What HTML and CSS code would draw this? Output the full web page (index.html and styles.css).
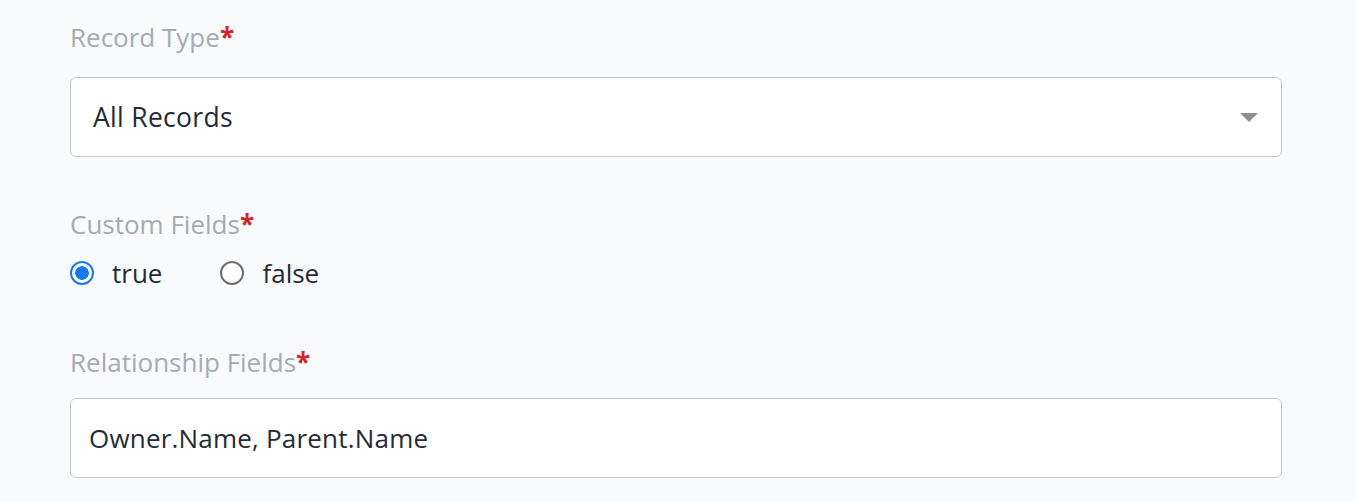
FILE: index.html
```html
<!DOCTYPE html>
<html>
<head>
<meta charset="utf-8">
<link rel="stylesheet" href="styles.css">
</head>
<body>
<div class="form">
  <div class="field">
    <div class="label">Record Type<span class="req">*</span></div>
    <div class="select">
      <span class="value">All Records</span>
      <span class="caret"></span>
    </div>
  </div>
  <div class="field radios-field">
    <div class="label">Custom Fields<span class="req">*</span></div>
    <div class="radios">
      <label class="radio"><span class="dot checked"></span><span class="rtext">true</span></label>
      <label class="radio"><span class="dot"></span><span class="rtext">false</span></label>
    </div>
  </div>
  <div class="field rel-field">
    <div class="label">Relationship Fields<span class="req">*</span></div>
    <div class="input">
      <span class="value2">Owner.Name, Parent.Name</span>
    </div>
  </div>
</div>
</body>
</html>
```
FILE: styles.css
```css
html, body {
  margin: 0;
  padding: 0;
  background: #f9fafc;
}
body {
  font-family: "Open Sans", "Lato", sans-serif;
  color: #262b33;
}
.form {
  padding: 19px 74px 0 70px;
  display: flex;
  flex-direction: column;
}
.label {
  font-size: 26px;
  line-height: 36px;
  color: #a3abb3;
}
.req {
  color: #d0262b;
  font-weight: 700;
}
.select {
  margin-top: 22px;
  border: 1px solid #c8c9cb;
  border-radius: 6px;
  background: #fff;
  display: flex;
  align-items: center;
  justify-content: space-between;
  padding: 0 23px 0 22px;
  box-sizing: border-box;
  height: 80px;
}
.value {
  font-size: 26.5px;
  letter-spacing: 0.3px;
}
.caret {
  width: 0;
  height: 0;
  border-left: 9px solid transparent;
  border-right: 9px solid transparent;
  border-top: 9px solid #8f8f8f;
}
.radios-field {
  margin-top: 49px;
}
.radios {
  display: flex;
  margin-top: 16px;
}
.radio {
  display: flex;
  align-items: center;
  font-size: 26px;
  margin-right: 58px;
}
.dot {
  width: 24px;
  height: 24px;
  box-sizing: border-box;
  border: 2px solid #6f6f6f;
  border-radius: 50%;
  background: #fff;
  margin-right: 18px;
}
.dot.checked {
  border-color: #1778f2;
  background: radial-gradient(circle, #1778f2 0 6.5px, #fff 7px);
}
.rtext {
  line-height: 30px;
}
.rel-field {
  margin-top: 56px;
}
.input {
  margin-top: 18px;
  height: 80px;
  border: 1px solid #c8c9cb;
  border-radius: 6px;
  background: #fff;
  display: flex;
  align-items: center;
  padding: 0 18px;
  box-sizing: border-box;
}
.value2 {
  font-size: 26px;
  letter-spacing: 0.2px;
}
```
